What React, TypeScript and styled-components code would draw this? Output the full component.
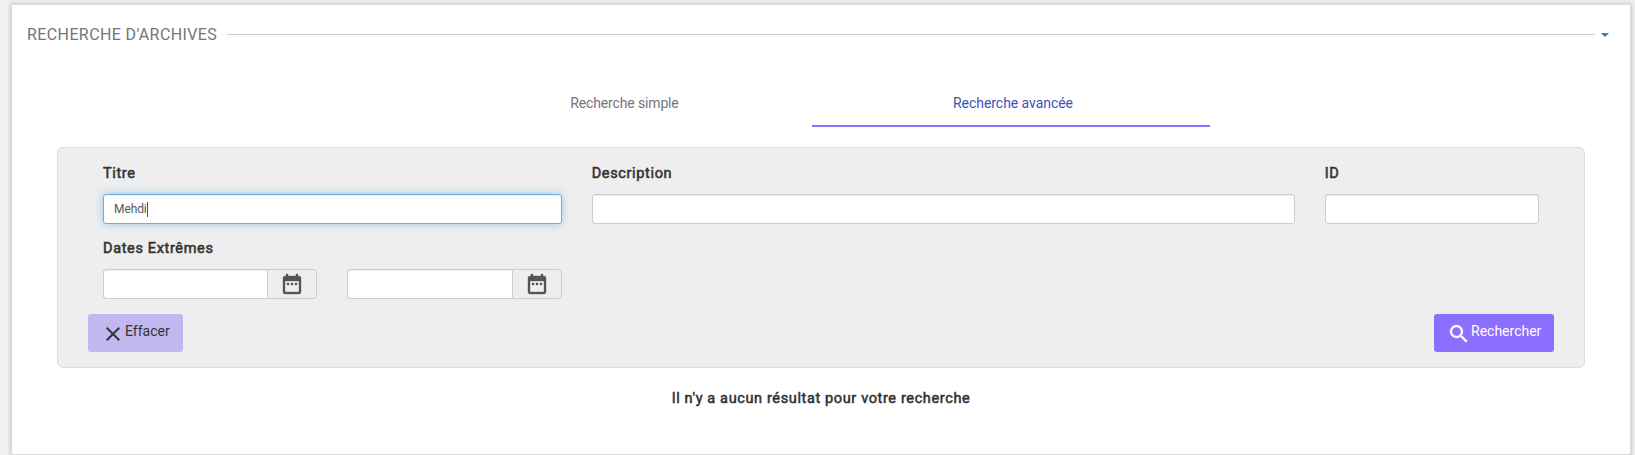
import React from "react";
import styled, { createGlobalStyle } from "styled-components";
import { MdClose } from "react-icons/md";

const GlobalStyle = createGlobalStyle`
  *, *::before, *::after { box-sizing: border-box; }
  body {
    margin: 0;
    background: #f1f1f1;
    color: #333;
    font: 14px/20px Roboto, "Liberation Sans", sans-serif;
    overflow: hidden;
  }
`;

const Page = styled.main`
  height: 455px;
  padding: 4px 4px 0 11px;
`;

const Card = styled.section`
  height: 451px;
  padding: 0 15px;
  background: #fff;
  border: 1px solid #dadada;
  box-shadow: 0 0 4px 1px rgba(0, 0, 0, 0.16);
`;

const Header = styled.header`
  display: flex;
  align-items: center;
  height: 59px;
  padding-right: 6px;
`;

const Title = styled.h1`
  margin: 0;
  width: 200px;
  color: #757575;
  font-size: 16px;
  font-weight: 400;
  letter-spacing: 0.4px;
  white-space: nowrap;
`;

const Rule = styled.div`
  flex: 1;
  height: 1px;
  background: #ccc;
`;

const Caret = styled.span`
  margin-left: 6px;
  margin-top: 1px;
  border-top: 4px solid #337ab7;
  border-left: 4px solid transparent;
  border-right: 4px solid transparent;
`;

const Tabs = styled.nav`
  display: flex;
  height: 48px;
  margin: 15px 0 20px 410px;
`;

const Tab = styled.button<{ $active?: boolean }>`
  width: ${(p) => (p.$active ? 398 : 375)}px;
  padding: 2px 0 0 ${(p) => (p.$active ? 4 : 0)}px;
  border: 0;
  border-bottom: 2px solid ${(p) => (p.$active ? "#8c6fff" : "transparent")};
  background: none;
  color: ${(p) => (p.$active ? "#3f51b5" : "#757575")};
  font: inherit;
  letter-spacing: ${(p) => (p.$active ? -0.05 : -0.15)}px;
`;

const Panel = styled.form`
  display: flex;
  flex-direction: column;
  height: 221px;
  margin: 0 30px;
  padding: 15px 30px;
  background: #eee;
  border: 1px solid #ddd;
  border-radius: 6px;
`;

const Row = styled.div`
  display: grid;
  grid-template-columns: repeat(12, 1fr);
  height: 75px;
`;

const Field = styled.div<{ $span: number }>`
  grid-column: span ${(p) => p.$span};
  padding: 0 15px;
`;

const Label = styled.label`
  display: block;
  height: 31px;
  padding-top: 1px;
  font-size: 14.5px;
  -webkit-text-stroke: 0.55px currentColor;
  letter-spacing: 0.65px;
`;

const TextBox = styled.div<{ $focused?: boolean }>`
  display: flex;
  align-items: center;
  flex: 1;
  height: 30px;
  padding: 0 10px;
  background: #fff;
  border: 1px solid ${(p) => (p.$focused ? "#66afe9" : "#ccc")};
  border-radius: 3px;
  box-shadow: inset 0 1px 1px rgba(0, 0, 0, 0.075)
    ${(p) => (p.$focused ? ", 0 0 8px rgba(102, 175, 233, 0.6)" : "")};
  color: #555;
  font-size: 12px;
  letter-spacing: -0.1px;
`;

const Cursor = styled.span`
  width: 1px;
  height: 15px;
  margin-left: 0.5px;
  background: #555;
`;

const DateGroup = styled.div`
  display: flex;

  ${TextBox} {
    border-right: 0;
    border-radius: 3px 0 0 3px;
  }
`;

const Addon = styled.span`
  display: flex;
  align-items: center;
  justify-content: center;
  width: 50px;
  height: 30px;
  border: 1px solid #ccc;
  border-radius: 0 4px 4px 0;
  color: #555;
`;

const DateColumn = styled(Field)`
  padding-top: 31px;
`;

const Actions = styled.div`
  display: flex;
  justify-content: space-between;
  margin-top: 1px;
`;

const Button = styled.button<{ $primary?: boolean }>`
  display: flex;
  width: ${(p) => (p.$primary ? 120 : 95)}px;
  height: 38px;
  padding: 8px 0 0 13px;
  border: 0;
  border-radius: 3px;
  background: ${(p) => (p.$primary ? "#8c6fff" : "#c3b7f0")};
  color: ${(p) => (p.$primary ? "#fff" : "#333")};
  font: inherit;
`;

const Glyph = styled.svg`
  flex: none;
  width: 24px;
  height: 24px;
  fill: currentColor;
  stroke: currentColor;
  stroke-width: 0.35px;
`;

const ButtonText = styled.span`
  height: 18px;
  line-height: 18px;
`;

const Empty = styled.p`
  margin: 21px 0 0;
  font-size: 14.5px;
  -webkit-text-stroke: 0.55px currentColor;
  letter-spacing: 0.63px;
  text-align: center;
`;

function CalendarIcon() {
  return (
    <Glyph viewBox="0 0 24 24">
      <path d="M9 11H7v2h2v-2zm4 0h-2v2h2v-2zm4 0h-2v2h2v-2zm2-7h-1V2h-2v2H8V2H6v2H5c-1.11 0-1.99.9-1.99 2L3 20c0 1.1.89 2 2 2h14c1.1 0 2-.9 2-2V6c0-1.1-.9-2-2-2zm0 16H5V9h14v11z" />
    </Glyph>
  );
}

function SearchIcon() {
  return (
    <Glyph viewBox="0 0 24 24">
      <path d="M15.5 14h-.79l-.28-.27A6.471 6.471 0 0 0 16 9.5 6.5 6.5 0 1 0 9.5 16c1.61 0 3.09-.59 4.23-1.57l.27.28v.79l5 4.99L20.49 19l-4.99-5zm-6 0C7.01 14 5 11.99 5 9.5S7.01 5 9.5 5 14 7.01 14 9.5 11.99 14 9.5 14z" />
    </Glyph>
  );
}

function DateInput() {
  return (
    <DateGroup>
      <TextBox />
      <Addon>
        <CalendarIcon />
      </Addon>
    </DateGroup>
  );
}

export default function App() {
  return (
    <Page>
      <GlobalStyle />
      <Card>
        <Header>
          <Title>RECHERCHE D'ARCHIVES</Title>
          <Rule />
          <Caret />
        </Header>
        <Tabs>
          <Tab>Recherche simple</Tab>
          <Tab $active>Recherche avancée</Tab>
        </Tabs>
        <Panel>
          <Row>
            <Field $span={4}>
              <Label>Titre</Label>
              <TextBox $focused>
                Mehdi
                <Cursor />
              </TextBox>
            </Field>
            <Field $span={6}>
              <Label>Description</Label>
              <TextBox />
            </Field>
            <Field $span={2}>
              <Label>ID</Label>
              <TextBox />
            </Field>
          </Row>
          <Row>
            <Field $span={2}>
              <Label>Dates Extrêmes</Label>
              <DateInput />
            </Field>
            <DateColumn $span={2}>
              <DateInput />
            </DateColumn>
          </Row>
          <Actions>
            <Button type="button">
              <MdClose size={24} />
              <ButtonText>Effacer</ButtonText>
            </Button>
            <Button type="button" $primary>
              <SearchIcon />
              <ButtonText>Rechercher</ButtonText>
            </Button>
          </Actions>
        </Panel>
        <Empty>Il n'y a aucun résultat pour votre recherche</Empty>
      </Card>
    </Page>
  );
}
